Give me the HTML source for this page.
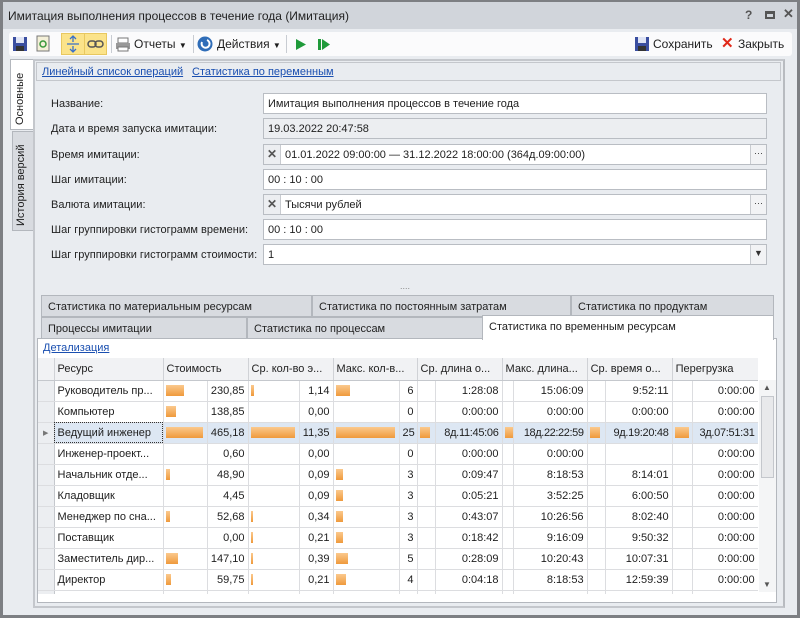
<!DOCTYPE html>
<html><head><meta charset="utf-8"><style>
*{box-sizing:border-box;margin:0;padding:0}
body{width:800px;height:618px;overflow:hidden;background:#e9ecf0;font-family:"Liberation Sans",sans-serif;font-size:11px;color:#1e1e1e;position:relative}
.a{position:absolute}
.lbl{position:absolute;left:51px;font-size:11px;color:#222}
.inp{position:absolute;left:263px;width:504px;height:21px;background:#fff;border:1px solid #b9bdc3;padding:4px 4px;font-size:11px;white-space:nowrap}
.ro{background:#eceef1}
.xb{position:absolute;left:0;top:0;width:17px;height:19px;border-right:1px solid #c8cbd0;background:#eceef1;text-align:center;font-weight:bold;color:#555;font-size:12px;line-height:19px}
.dd{position:absolute;right:0;top:0;width:16px;height:19px;border-left:1px solid #c8cbd0;background:#f2f3f5;text-align:center;font-size:9px;line-height:17px;color:#333}
.tab{position:absolute;height:22px;background:#d8dbe0;border:1px solid #b3b7bd;padding:5px 6px;font-size:11px;color:#222;white-space:nowrap}
table{border-collapse:collapse;table-layout:fixed}
td{border-right:1px solid #dcdde0;border-bottom:1px solid #dcdde0;height:21px;font-size:11px;white-space:nowrap;overflow:hidden;padding:0 3px}
.h td{background:#f1f2f4;border-right:1px solid #d0d2d6;border-bottom:1px solid #c5c8cd;height:22px;color:#222}
.b{padding:0 0 0 2px}
.b i{display:block;height:11px;background:linear-gradient(#fbc98d,#ef9a3c)}
.r{text-align:right}
.ind{background:#eceef1;border-right:1px solid #c5c8cd;padding:0}
.sel td{background:#dde7f3}
</style></head><body>
<div class="a" style="left:0;top:0;width:800px;height:618px;border:3px solid #7d7f83;border-top-width:2px"></div>
<div class="a" style="left:3px;top:2px;width:794px;height:27px;background:#d1d5db"></div>
<div class="a" style="left:8px;top:9px;font-size:12px;color:#222">Имитация выполнения процессов в течение года (Имитация)</div>
<div class="a" style="left:745px;top:8px;font-size:12px;color:#555;font-weight:bold">?</div>
<div class="a" style="left:765px;top:11px;width:10px;height:8px;border:2px solid #555;border-top-width:3px"></div>
<div class="a" style="left:783px;top:6px;font-size:13px;color:#555;font-weight:bold">✕</div>
<!-- toolbar -->
<div class="a" style="left:9px;top:32px;width:783px;height:24px;background:#fbfbfc;border-radius:3px"></div>
<svg class="a" style="left:12px;top:36px" width="16" height="16"><rect x="1" y="1" width="14" height="14" fill="#3a4ea0"/><rect x="4" y="1" width="8" height="6" fill="#dfe4f5"/><rect x="4" y="10" width="8" height="5" fill="#333"/></svg>
<svg class="a" style="left:36px;top:35px" width="14" height="17"><rect x="1" y="1" width="12" height="15" fill="#f4f0d8" stroke="#777"/><path d="M4 9a3 3 0 0 1 6 0M10 9a3 3 0 0 1-6 0" stroke="#3a9a3a" fill="none" stroke-width="1.5"/></svg>
<div class="a" style="left:61px;top:33px;width:46px;height:22px;background:#fbe38a;border:1px solid #e8c860"></div>
<div class="a" style="left:84px;top:33px;width:1px;height:22px;background:#e8c860"></div>
<svg class="a" style="left:66px;top:35px" width="14" height="18"><path d="M7 1v6M7 11v6M1 9h12M4 4l3-3 3 3M4 14l3 3 3-3" stroke="#3a70c8" fill="none" stroke-width="1.3"/></svg>
<svg class="a" style="left:87px;top:39px" width="18" height="10"><rect x="1" y="2" width="8" height="6" rx="3" fill="none" stroke="#555" stroke-width="1.5"/><rect x="8" y="2" width="8" height="6" rx="3" fill="none" stroke="#555" stroke-width="1.5"/></svg>
<div class="a" style="left:111px;top:35px;width:1px;height:18px;background:#c8ccd2"></div>
<svg class="a" style="left:115px;top:37px" width="16" height="15"><rect x="3" y="1" width="10" height="5" fill="#fff" stroke="#777"/><rect x="1" y="6" width="14" height="6" fill="#999"/><rect x="3" y="10" width="10" height="4" fill="#fff" stroke="#777"/></svg>
<div class="a" style="left:134px;top:37px;font-size:12px">Отчеты <span style="font-size:8px">▼</span></div>
<div class="a" style="left:193px;top:35px;width:1px;height:18px;background:#c8ccd2"></div>
<svg class="a" style="left:197px;top:36px" width="16" height="16"><circle cx="8" cy="8" r="7.5" fill="#2f6db8"/><path d="M5 6a4 4 0 1 0 5-2" stroke="#fff" fill="none" stroke-width="2"/></svg>
<div class="a" style="left:217px;top:37px;font-size:12px">Действия <span style="font-size:8px">▼</span></div>
<div class="a" style="left:286px;top:35px;width:1px;height:18px;background:#c8ccd2"></div>
<svg class="a" style="left:295px;top:38px" width="12" height="13"><path d="M1 1l10 5.5L1 12z" fill="#1f9a3a"/></svg>
<svg class="a" style="left:317px;top:38px" width="14" height="13"><rect x="1" y="1" width="3" height="11" fill="#1f9a3a"/><path d="M5 1l8 5.5L5 12z" fill="#1f9a3a"/></svg>
<svg class="a" style="left:634px;top:36px" width="16" height="16"><rect x="1" y="1" width="14" height="14" fill="#3a4ea0"/><rect x="4" y="1" width="8" height="6" fill="#dfe4f5"/><rect x="4" y="10" width="8" height="5" fill="#333"/></svg>
<div class="a" style="left:653px;top:37px;font-size:12px">Сохранить</div>
<div class="a" style="left:721px;top:34px;font-size:15px;color:#e02818;font-weight:bold">✕</div>
<div class="a" style="left:738px;top:37px;font-size:12px">Закрыть</div>
<!-- side tabs -->
<div class="a" style="left:10px;top:59px;width:24px;height:71px;background:#fff;border:1px solid #b3b7bd;border-right:none"></div>
<div class="a" style="transform:rotate(-90deg);transform-origin:0 0;top:125px;left:14px;font-size:11px">Основные</div>
<div class="a" style="left:12px;top:131px;width:22px;height:100px;background:#d8dbe0;border:1px solid #b3b7bd;border-right:none"></div>
<div class="a" style="left:15px;top:226px;transform:rotate(-90deg);transform-origin:0 0;font-size:11px;white-space:nowrap">История версий</div>
<div class="a" style="left:33px;top:59px;width:752px;height:549px;border:2px solid #c4c7cc;border-right-color:#b8bbc0"></div>
<div class="a" style="left:36px;top:62px;width:745px;height:19px;border:1px solid #c4c7cc"></div>
<div class="a" style="left:42px;top:66px;color:#1a4fb0;text-decoration:underline">Линейный список операций</div>
<div class="a" style="left:192px;top:66px;color:#1a4fb0;text-decoration:underline">Статистика по переменным</div>
<!-- form -->
<div class="lbl" style="top:98px">Название:</div>
<div class="inp" style="top:93px">Имитация выполнения процессов в течение года</div>
<div class="lbl" style="top:123px">Дата и время запуска имитации:</div>
<div class="inp ro" style="top:118px">19.03.2022 20:47:58</div>
<div class="lbl" style="top:149px">Время имитации:</div>
<div class="inp" style="top:144px;padding-left:21px"><div class="xb">✕</div>01.01.2022 09:00:00 — 31.12.2022 18:00:00 (364д.09:00:00)<div class="dd">···</div></div>
<div class="lbl" style="top:174px">Шаг имитации:</div>
<div class="inp" style="top:169px">00 : 10 : 00</div>
<div class="lbl" style="top:199px">Валюта имитации:</div>
<div class="inp" style="top:194px;padding-left:21px"><div class="xb">✕</div>Тысячи рублей<div class="dd">···</div></div>
<div class="lbl" style="top:224px">Шаг группировки гистограмм времени:</div>
<div class="inp" style="top:219px">00 : 10 : 00</div>
<div class="lbl" style="top:249px">Шаг группировки гистограмм стоимости:</div>
<div class="inp" style="top:244px">1<div class="dd">▼</div></div>
<div class="a" style="left:400px;top:281px;color:#888;font-size:9px">....</div>
<!-- tabs -->
<div class="tab" style="left:41px;top:295px;width:271px">Статистика по материальным ресурсам</div>
<div class="tab" style="left:312px;top:295px;width:259px">Статистика по постоянным затратам</div>
<div class="tab" style="left:571px;top:295px;width:203px">Статистика по продуктам</div>
<div class="tab" style="left:41px;top:317px;width:206px">Процессы имитации</div>
<div class="tab" style="left:247px;top:317px;width:236px">Статистика по процессам</div>
<div class="a" style="left:37px;top:338px;width:740px;height:265px;background:#fff;border:1px solid #b3b7bd"></div>
<div class="tab" style="left:482px;top:315px;width:292px;height:25px;background:#fff;border-bottom:none">Статистика по временным ресурсам</div>
<div class="a" style="left:43px;top:342px;color:#1a4fb0;text-decoration:underline">Детализация</div>
<div class="a" style="left:38px;top:358px;width:720px;height:236px;overflow:hidden">
<table style="width:720px">
<colgroup><col style="width:16px"><col style="width:109px"><col style="width:44px"><col style="width:41px"><col style="width:51px"><col style="width:34px"><col style="width:66px"><col style="width:18px"><col style="width:18px"><col style="width:67px"><col style="width:11px"><col style="width:74px"><col style="width:18px"><col style="width:67px"><col style="width:20px"><col style="width:66px"></colgroup>
<tr class="h"><td class="ind"></td><td>Ресурс</td><td colspan="2">Стоимость</td><td colspan="2">Ср. кол-во э...</td><td colspan="2">Макс. кол-в...</td><td colspan="2">Ср. длина о...</td><td colspan="2">Макс. длина...</td><td colspan="2">Ср. время о...</td><td colspan="2">Перегрузка</td></tr>
<tr><td class="ind"></td><td>Руководитель пр...</td><td class="b"><i style="width:18px"></i></td><td class="r">230,85</td><td class="b"><i style="width:3px"></i></td><td class="r">1,14</td><td class="b"><i style="width:14px"></i></td><td class="r">6</td><td class="b"></td><td class="r">1:28:08</td><td class="b"></td><td class="r">15:06:09</td><td class="b"></td><td class="r">9:52:11</td><td class="b"></td><td class="r">0:00:00</td></tr>
<tr><td class="ind"></td><td>Компьютер</td><td class="b"><i style="width:10px"></i></td><td class="r">138,85</td><td class="b"></td><td class="r">0,00</td><td class="b"></td><td class="r">0</td><td class="b"></td><td class="r">0:00:00</td><td class="b"></td><td class="r">0:00:00</td><td class="b"></td><td class="r">0:00:00</td><td class="b"></td><td class="r">0:00:00</td></tr>
<tr class="sel"><td class="ind" style="background:#eceef1;color:#777;font-size:7px;text-align:center">▶</td><td style="outline:1px dotted #333;outline-offset:-1px">Ведущий инженер</td><td class="b"><i style="width:37px"></i></td><td class="r">465,18</td><td class="b"><i style="width:44px"></i></td><td class="r">11,35</td><td class="b"><i style="width:59px"></i></td><td class="r">25</td><td class="b"><i style="width:10px"></i></td><td class="r" style="letter-spacing:-0.3px">8д.11:45:06</td><td class="b"><i style="width:8px"></i></td><td class="r" style="letter-spacing:-0.4px">18д.22:22:59</td><td class="b"><i style="width:10px"></i></td><td class="r" style="letter-spacing:-0.3px">9д.19:20:48</td><td class="b"><i style="width:14px"></i></td><td class="r" style="letter-spacing:-0.3px">3д.07:51:31</td></tr>
<tr><td class="ind"></td><td>Инженер-проект...</td><td class="b"></td><td class="r">0,60</td><td class="b"></td><td class="r">0,00</td><td class="b"></td><td class="r">0</td><td class="b"></td><td class="r">0:00:00</td><td class="b"></td><td class="r">0:00:00</td><td class="b"></td><td class="r"></td><td class="b"></td><td class="r">0:00:00</td></tr>
<tr><td class="ind"></td><td>Начальник отде...</td><td class="b"><i style="width:4px"></i></td><td class="r">48,90</td><td class="b"></td><td class="r">0,09</td><td class="b"><i style="width:7px"></i></td><td class="r">3</td><td class="b"></td><td class="r">0:09:47</td><td class="b"></td><td class="r">8:18:53</td><td class="b"></td><td class="r">8:14:01</td><td class="b"></td><td class="r">0:00:00</td></tr>
<tr><td class="ind"></td><td>Кладовщик</td><td class="b"></td><td class="r">4,45</td><td class="b"></td><td class="r">0,09</td><td class="b"><i style="width:7px"></i></td><td class="r">3</td><td class="b"></td><td class="r">0:05:21</td><td class="b"></td><td class="r">3:52:25</td><td class="b"></td><td class="r">6:00:50</td><td class="b"></td><td class="r">0:00:00</td></tr>
<tr><td class="ind"></td><td>Менеджер по сна...</td><td class="b"><i style="width:4px"></i></td><td class="r">52,68</td><td class="b"><i style="width:2px"></i></td><td class="r">0,34</td><td class="b"><i style="width:7px"></i></td><td class="r">3</td><td class="b"></td><td class="r">0:43:07</td><td class="b"></td><td class="r">10:26:56</td><td class="b"></td><td class="r">8:02:40</td><td class="b"></td><td class="r">0:00:00</td></tr>
<tr><td class="ind"></td><td>Поставщик</td><td class="b"></td><td class="r">0,00</td><td class="b"><i style="width:2px"></i></td><td class="r">0,21</td><td class="b"><i style="width:7px"></i></td><td class="r">3</td><td class="b"></td><td class="r">0:18:42</td><td class="b"></td><td class="r">9:16:09</td><td class="b"></td><td class="r">9:50:32</td><td class="b"></td><td class="r">0:00:00</td></tr>
<tr><td class="ind"></td><td>Заместитель дир...</td><td class="b"><i style="width:12px"></i></td><td class="r">147,10</td><td class="b"><i style="width:2px"></i></td><td class="r">0,39</td><td class="b"><i style="width:12px"></i></td><td class="r">5</td><td class="b"></td><td class="r">0:28:09</td><td class="b"></td><td class="r">10:20:43</td><td class="b"></td><td class="r">10:07:31</td><td class="b"></td><td class="r">0:00:00</td></tr>
<tr><td class="ind"></td><td>Директор</td><td class="b"><i style="width:5px"></i></td><td class="r">59,75</td><td class="b"><i style="width:2px"></i></td><td class="r">0,21</td><td class="b"><i style="width:10px"></i></td><td class="r">4</td><td class="b"></td><td class="r">0:04:18</td><td class="b"></td><td class="r">8:18:53</td><td class="b"></td><td class="r">12:59:39</td><td class="b"></td><td class="r">0:00:00</td></tr>
<tr><td class="ind"></td><td></td><td></td><td></td><td></td><td></td><td></td><td></td><td></td><td></td><td></td><td></td><td></td><td></td><td></td><td></td></tr>
</table></div>
<div class="a" style="left:759px;top:380px;width:17px;height:212px;background:#f4f5f6"></div>
<div class="a" style="left:763px;top:383px;font-size:8px;color:#555">▲</div>
<div class="a" style="left:761px;top:396px;width:13px;height:82px;background:#e8e9eb;border:1px solid #c4c7cc"></div>
<div class="a" style="left:763px;top:580px;font-size:8px;color:#555">▼</div>
</body></html>
